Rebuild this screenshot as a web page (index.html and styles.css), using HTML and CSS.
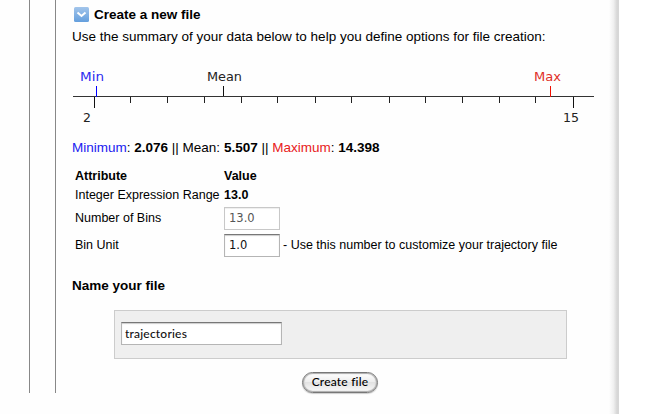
FILE: index.html
```html
<!DOCTYPE html>
<html lang="en">
<head>
<meta charset="utf-8">
<title>Create a new file</title>
<link rel="stylesheet" href="styles.css">
</head>
<body>
<div class="page">
  <div class="outer">
    <form class="panel">
      <h2 class="heading">
        <svg class="toggle" width="15" height="15" viewBox="0 0 15 15">
          <defs><linearGradient id="blue" x1="0" y1="0" x2="0" y2="1"><stop offset="0" stop-color="#a3c5eb"/><stop offset="1" stop-color="#649fdd"/></linearGradient></defs>
          <rect width="15" height="15" rx="1.5" fill="url(#blue)"/>
          <path d="M3.500 5.500L7.500 9L11.500 5.500" fill="none" stroke="#fff" stroke-width="2"/>
        </svg>
        <span>Create a new file</span>
      </h2>
      <p class="intro">Use the summary of your data below to help you define options for file creation:</p>
      <svg class="chart" width="523" height="91" viewBox="72 48 523 91">
        <path d="M73 96.500H594" stroke="#333"/>
        <path d="M94.500 97V108M573.500 97V108M223.500 86V96" stroke="#111"/>
        <path d="M130.500 97V103M167.500 97V103M204.500 97V103M241.500 97V103M277.500 97V103M315.500 97V103M351.500 97V103M389.500 97V103M425.500 97V103M462.500 97V103M499.500 97V103M535.500 97V103" stroke="#222"/>
        <path d="M96.500 86V97" stroke="#00f"/>
        <path d="M550.500 86V97" stroke="#f00f00"/>
        <text x="80" y="81" textLength="24" lengthAdjust="spacingAndGlyphs" fill="#2b2bf0">Min</text>
        <text x="207" y="81" textLength="35" lengthAdjust="spacingAndGlyphs">Mean</text>
        <text x="534" y="81" textLength="27" lengthAdjust="spacingAndGlyphs" fill="#e03028">Max</text>
        <text x="83" y="122">2</text>
        <text x="563" y="122" textLength="16" lengthAdjust="spacingAndGlyphs">15</text>
      </svg>
      <p class="stats"><span class="min">Minimum</span>: <b>2.076</b> || Mean: <b>5.507</b> || <span class="max">Maximum</span>: <b>14.398</b></p>
      <div class="table">
        <b>Attribute</b><b>Value</b>
        <span class="range">Integer Expression Range</span><b>13.0</b>
        <span>Number of Bins</span><div><input class="small" value="13.0" disabled></div>
        <span>Bin Unit</span><div class="unit"><input class="small" value="1.0"><span class="hint">- Use this number to customize your trajectory file</span></div>
      </div>
      <h3 class="name">Name your file</h3>
      <div class="box"><input class="filename" value="trajectories"></div>
      <button class="create" type="button">Create file</button>
    </form>
  </div>
  <div class="shade"></div>
</div>
</body>
</html>
```
FILE: styles.css
```css
* { box-sizing: border-box; }
body {
  margin: 0;
  background: #fff;
  color: #000;
  font: 13.500px "Liberation Sans", Arial, sans-serif;
  overflow: hidden;
}
.page {
  display: flex;
  justify-content: space-between;
  width: 619px;
  height: 414px;
  background: #fefefe;
}
.outer {
  margin-left: 29px;
  padding-left: 25px;
  height: 393px;
  border-left: 1px solid #888;
}
.panel {
  height: 393px;
  width: 545px;
  padding: 4px 0 0 16px;
  border-left: 1px solid #888;
}
.shade {
  width: 10px;
  background: linear-gradient(to right, #fefefe, #f0f0f0 45%, #d7d7d7 80%, #d7d7d7);
}
.heading {
  display: flex;
  align-items: center;
  gap: 5px;
  margin: 0;
  padding-left: 2px;
  height: 21px;
  font-size: 13.500px;
}
.intro {
  margin: 0;
  line-height: 23px;
  white-space: nowrap;
}
.chart {
  display: block;
  fill: #222;
  font: 12.500px "DejaVu Sans", sans-serif;
}
.stats {
  margin: 0;
  line-height: 17px;
  white-space: nowrap;
}
.min { color: #1a1af0; }
.max { color: #e8201a; }
.table {
  display: grid;
  grid-template-columns: 149px 1fr;
  grid-template-rows: 19px 20px 26px 28px;
  align-items: center;
  margin: 10px 0 0 3px;
  font-size: 12.500px;
  white-space: nowrap;
}
input {
  display: block;
  margin: 0;
  height: 23px;
  padding: 0 4px;
  color: #111;
  background: #fff;
  border: 1px solid #b5b5b5;
  border-top-color: #777;
  border-radius: 0;
  box-shadow: inset 0 1px 1px #ccc;
  font: 11.500px "DejaVu Sans", sans-serif;
}
.small { width: 56px; }
input:disabled {
  color: #555;
  border-color: #c8c8c8;
  box-shadow: inset 0 1px 1px #eee;
}
.unit {
  display: flex;
  align-items: center;
  gap: 3px;
}
.name {
  margin: 12px 0 10px;
  font-size: 13.500px;
  line-height: 29px;
}
.box {
  width: 453px;
  height: 49px;
  margin-left: 42px;
  padding: 11px 6px;
  background: #efefef;
  border: 1px solid #ccc;
}
.filename {
  width: 161px;
  padding: 0 3px;
  font: 500 12px Lato, sans-serif;
  letter-spacing: 0.200px;
}
.create {
  display: block;
  width: 76px;
  height: 21px;
  margin: 13px 0 0 230px;
  padding: 0 0 2px;
  color: #000;
  border: 1px solid #777;
  border-radius: 11px;
  background: linear-gradient(#fff, #eee 45%, #e2e2e2 50%, #fafafa);
  box-shadow: inset 0 0 1px 1px #aaa, 0 1px 1px #ccc;
  font: 500 12px Lato, sans-serif;
  letter-spacing: 0.200px;
}
```
